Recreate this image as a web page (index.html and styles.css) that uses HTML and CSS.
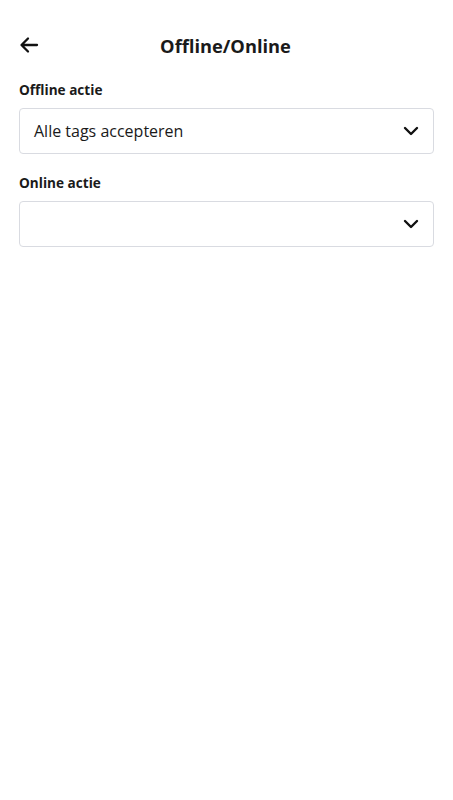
FILE: index.html
```html
<!DOCTYPE html>
<html lang="nl">
<head>
<meta charset="utf-8">
<link rel="stylesheet" href="styles.css">
</head>
<body>
<div class="screen">
  <header class="topbar">
    <button class="back" aria-label="Terug">
      <svg width="20" height="20" viewBox="0 0 20 20"><path d="M18 10H3M9 3.5L2.5 10L9 16.5" fill="none" stroke="#111" stroke-width="2.3" stroke-linecap="round" stroke-linejoin="round"/></svg>
    </button>
    <h1 class="title">Offline/Online</h1>
  </header>
  <main class="form">
    <div class="field">
      <div class="label">Offline actie</div>
      <div class="select">
        <span class="value">Alle tags accepteren</span>
        <svg class="chev" width="16" height="10" viewBox="0 0 16 10"><path d="M2 2l6 6 6-6" fill="none" stroke="#111" stroke-width="2.4" stroke-linecap="round" stroke-linejoin="round"/></svg>
      </div>
    </div>
    <div class="field">
      <div class="label">Online actie</div>
      <div class="select">
        <span class="value"></span>
        <svg class="chev" width="16" height="10" viewBox="0 0 16 10"><path d="M2 2l6 6 6-6" fill="none" stroke="#111" stroke-width="2.4" stroke-linecap="round" stroke-linejoin="round"/></svg>
      </div>
    </div>
  </main>
</div>
</body>
</html>
```
FILE: styles.css
```css
html, body {
  margin: 0;
  padding: 0;
  background: #fff;
}
body {
  font-family: "Open Sans", "Liberation Sans", sans-serif;
  color: #1a1a1a;
}
.screen {
  width: 453px;
  min-height: 800px;
}
.topbar {
  position: relative;
  height: 50px;
  margin-top: 20px;
  display: flex;
  align-items: center;
  justify-content: center;
}
.back {
  position: absolute;
  left: 19px;
  top: 15px;
  width: 20px;
  height: 20px;
  padding: 0;
  border: 0;
  background: none;
  display: flex;
}
.title {
  margin: 0;
  font-size: 18.3px;
  font-weight: 700;
  color: #1a1a1a;
  transform: translateX(-1px);
}
.form {
  padding: 9px 19px 0 19px;
  display: flex;
  flex-direction: column;
  gap: 18px;
}
.field {
  display: flex;
  flex-direction: column;
  gap: 7px;
}
.label {
  font-size: 13.6px;
  font-weight: 700;
  line-height: 22px;
}
.select {
  height: 44px;
  border: 1px solid #d9dbe1;
  border-radius: 4px;
  display: flex;
  align-items: center;
  justify-content: space-between;
  padding: 0 14px 0 14px;
}
.value {
  font-size: 16px;
  color: #1a1a1a;
}
.chev {
  display: block;
}
```
